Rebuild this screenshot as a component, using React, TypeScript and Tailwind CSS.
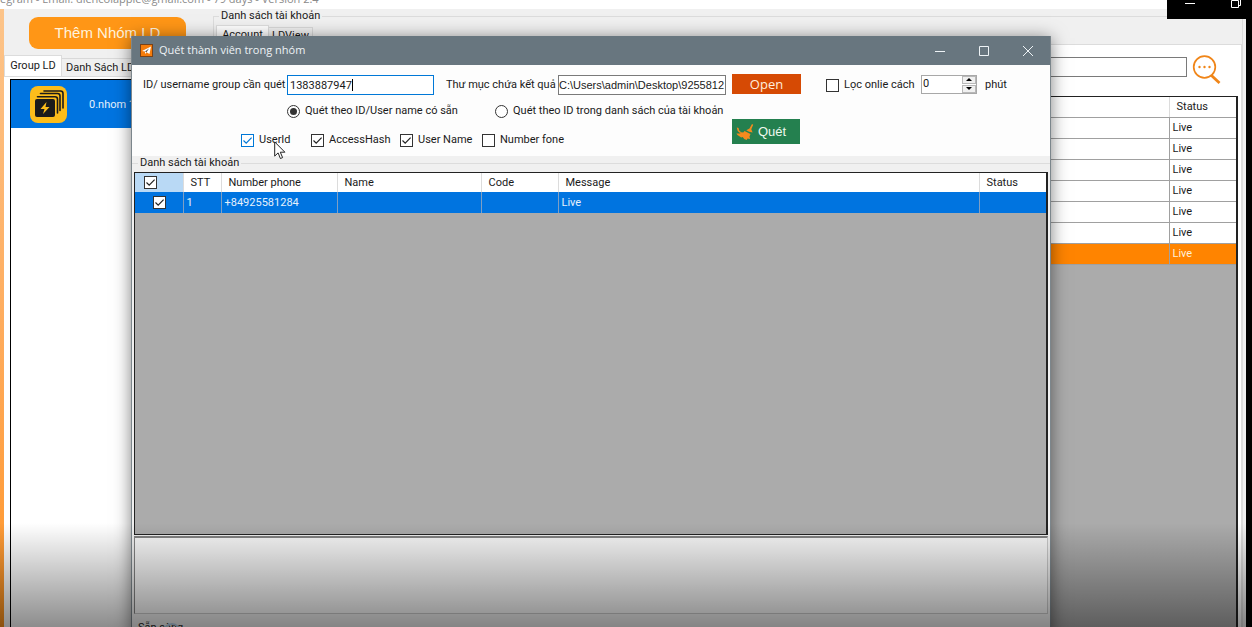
import type { ReactNode } from "react";

type Account = {
  id: number;
  phone: string;
  name: string;
  code: string;
  message: string;
  status: string;
};

interface CheckProps {
  label: string;
  checked?: boolean;
  active?: boolean;
  className?: string;
  children?: ReactNode;
}

interface RadioProps {
  label: string;
  checked?: boolean;
  className?: string;
}

const accounts: Account[] = [
  { id: 1, phone: "+84925581284", name: "", code: "", message: "Live", status: "" },
];

const liveRows = ["Live", "Live", "Live", "Live", "Live", "Live", "Live"];

function TickBox({ label, checked, active }: { label?: string; checked?: boolean; active?: boolean }) {
  return (
    <span className="grid h-[13px] w-[13px] shrink-0">
      <input
        type="checkbox"
        aria-label={label}
        defaultChecked={checked}
        className={`peer col-start-1 row-start-1 m-0 h-[13px] w-[13px] appearance-none border bg-white ${
          active ? "border-[#0078d7]" : "border-[#333333]"
        }`}
      />
      <svg
        viewBox="0 0 13 13"
        className={`pointer-events-none invisible col-start-1 row-start-1 h-[13px] w-[13px] peer-checked:visible ${
          active ? "text-[#0078d7]" : "text-[#222222]"
        }`}
      >
        <path d="M2.5 6.5 5.2 9.2 10.6 3.6" fill="none" stroke="currentColor" strokeWidth="1.2" />
      </svg>
    </span>
  );
}

function Check({ label, checked, active, className, children }: CheckProps) {
  return (
    <label className={`relative flex items-center gap-[5px] whitespace-nowrap ${className ?? ""}`}>
      <TickBox checked={checked} active={active} />
      {label}
      {children}
    </label>
  );
}

function Radio({ label, checked, className }: RadioProps) {
  return (
    <label className={`flex items-center gap-[5px] whitespace-nowrap ${className ?? ""}`}>
      <input
        type="radio"
        name="scan-mode"
        defaultChecked={checked}
        className="m-0 h-[13px] w-[13px] shrink-0 appearance-none rounded-full border border-[#333333] bg-white checked:bg-[#333333] checked:bg-clip-content checked:p-[2px]"
      />
      {label}
    </label>
  );
}

function GroupIcon() {
  return (
    <svg viewBox="0 0 37 37" className="h-[37px] w-[37px] shrink-0">
      <rect width="37" height="37" rx="8" fill="#fcbd1b" />
      <rect x="5" y="13" width="20" height="18" rx="2" fill="#1b1b1b" />
      <g fill="none" stroke="#1b1b1b" strokeWidth="1.6" strokeLinecap="round">
        <path d="M7.500 10.700h17.500q2.500 0 2.500 2.500V27" />
        <path d="M10 8h17q2.500 0 2.500 2.500V25" transform="translate(.5 -.5)" />
        <path d="M14 5h16.500q2.500 0 2.500 2.500V22" />
      </g>
      <path d="M16.500 16 10.500 23h4l-1.500 5 6.500-7h-4z" fill="#fcbd1b" />
    </svg>
  );
}

function SearchIcon() {
  return (
    <svg viewBox="0 0 30 30" className="h-[30px] w-[30px]" fill="none" stroke="#f08518">
      <circle cx="12.500" cy="12" r="10.800" strokeWidth="1.700" />
      <path d="m19.500 20.500 8 7.500" strokeWidth="2.800" />
      <g fill="#f08518" stroke="none">
        <circle cx="7.500" cy="12" r="1.200" />
        <circle cx="12.500" cy="12" r="1.200" />
        <circle cx="17.500" cy="12" r="1.200" />
      </g>
    </svg>
  );
}

function BroomIcon() {
  return (
    <svg viewBox="0 0 18 18" className="h-[18px] w-[18px] shrink-0" fill="#f58a1e">
      <path d="m16 1 1.200.800-1.900 4.400 1.300 3.300-3.600-.700-2.700-1.500 3.200-1.800z" />
      <path d="M8.500 8 14.500 11l-1 2.500.500 2.500-2.500-.500-.800 1.500-2.500-1-1.500-2-1.500.500-3.700-2.500-1-1.500 3.500 0 1.300-1.200 2 .300z" />
      <path d="m.8 4.500 1.700.500L3.200 7.500 5.500 9.500 4 10 1.700 8z" />
    </svg>
  );
}

function Cursor() {
  return (
    <svg viewBox="0 0 12 19" className="absolute left-[33px] top-[8px] h-[19px] w-3">
      <path
        d="M.7.900v14.200l3.400-3.200 2.300 5.600 2.200-.9-2.300-5.400h4.600z"
        fill="#fff"
        stroke="#222"
        strokeWidth="1"
      />
    </svg>
  );
}

function MainWindow() {
  return (
    <div className="flex h-[calc(100%+8px)] flex-col bg-[#f0f0f0]">
      <div className="h-[9px] shrink-0 overflow-hidden bg-white">
        <p className="-mt-2 whitespace-pre font-['Open_Sans',sans-serif] text-[11px] leading-[14px] text-[#8a8a8a]">
          egram - Email: diencoiapple@gmail.com - 79 days - Version 2.4
        </p>
      </div>

      <div className="flex min-h-0 flex-1">
        <div className="w-1 shrink-0 bg-gradient-to-b from-[#fcc48a] to-[#ff9318]" />

        {/* Group list */}
        <div className="flex w-[209px] shrink-0 flex-col">
          <div className="h-[46px] pl-[25px] pt-2">
            <button className="h-8 w-[157px] rounded-[9px] bg-[#ff9616] font-['Liberation_Sans',sans-serif] text-[15px] text-[#fff3dc]">
              Thêm Nhóm LD
            </button>
          </div>
          <div className="flex items-end">
            <button className="h-[21px] w-[58px] border border-b-0 border-[#dcdcdc] bg-white">Group LD</button>
            <button className="h-[18px] w-[80px] whitespace-nowrap border border-b-0 border-l-0 border-[#d9d9d9] pl-1 text-left">
              Danh Sách LD
            </button>
          </div>
          <div className="flex flex-1 flex-col border-t border-[#dcdcdc] bg-white pl-1.5 pt-0.5">
            <div className="flex-1 border border-black bg-white">
              <div className="flex h-12 items-center bg-[#0074e0] pl-[19px] text-[#e6f1fc]">
                <GroupIcon />
                <span className="ml-[22px] mt-0.5 whitespace-nowrap">0.nhom 1</span>
              </div>
            </div>
          </div>
        </div>

        {/* Account list */}
        <div className="flex min-w-0 flex-1 flex-col pr-[3px]">
          <fieldset className="flex min-h-0 min-w-0 flex-1 flex-col border border-[#dcdcdc] pl-0.5">
            <legend className="ml-[3px] px-0.5 leading-[14px]">Danh sách tài khoản</legend>
            <div className="flex h-[21px] items-end">
              <button className="h-[19px] w-[53px] border border-b-0 border-[#dcdcdc] bg-white">Account</button>
              <button className="h-[17px] w-[44px] border border-b-0 border-l-0 border-[#d9d9d9]">LDView</button>
            </div>
            <div className="flex flex-1 flex-col border border-[#dcdcdc] bg-white pr-[3px]">
              <div className="flex h-[51px] items-center justify-end gap-[5px] pr-4">
                <input aria-label="Tìm kiếm" className="mb-2 h-5 w-[400px] border border-[#7a7a7a] bg-white px-1" />
                <button aria-label="Tìm" className="mb-0.5">
                  <SearchIcon />
                </button>
              </div>
              <div className="flex-1 border border-r-2 border-[#222222] bg-[#ababab]">
                <table className="w-full table-fixed border-collapse bg-white">
                  <thead>
                    <tr className="h-5">
                      <th className="border-b border-[#a0a0a0]" aria-label="Message" />
                      <th className="w-[67px] border-b border-l border-b-[#a0a0a0] border-l-[#dcdcdc] p-0 pl-[7px] text-left font-normal leading-[14px]">
                        Status
                      </th>
                    </tr>
                  </thead>
                  <tbody>
                    {liveRows.map((status, index) => (
                      <tr
                        key={index}
                        className={`h-[21px] ${index === liveRows.length - 1 ? "bg-[#ff8400] text-[#fff0d8]" : ""}`}
                      >
                        <td className="border-b border-[#a0a0a0] p-0" />
                        <td className="border-b border-l border-[#a0a0a0] p-0 pl-[3px] leading-[14px]">{status}</td>
                      </tr>
                    ))}
                  </tbody>
                </table>
              </div>
            </div>
          </fieldset>
        </div>
      </div>
    </div>
  );
}

function ScanForm() {
  return (
    <form className="h-[91px] shrink-0 bg-[#fdfdfd] pl-[11px] pt-[9px]" onSubmit={(e) => e.preventDefault()}>
      <div className="flex h-[22px] items-center whitespace-nowrap">
        <label htmlFor="group" className="w-36 shrink-0">
          ID/ username group cần quét
        </label>
        <div className="relative flex w-[147px] shrink-0">
          <input
            id="group"
            defaultValue="1383887947"
            className="h-5 w-full border border-[#0078d7] bg-white px-0.5 outline-none"
          />
          <span className="absolute left-[65px] top-1 h-3 w-px bg-black" />
        </div>
        <label htmlFor="folder" className="ml-3 w-28 shrink-0">
          Thư mục chứa kết quả
        </label>
        <input
          id="folder"
          defaultValue="C:\Users\admin\Desktop\9255812"
          className="h-5 w-[168px] shrink-0 border border-[#7a7a7a] bg-white font-['Liberation_Sans',sans-serif]"
        />
        <button
          type="button"
          className="mb-0.5 ml-1.5 h-5 w-[69px] shrink-0 bg-[#d64a04] font-['Open_Sans',sans-serif] text-[13px] leading-5 text-[#ffeedd]"
        >
          Open
        </button>
        <Check label="Lọc onlie cách" className="ml-[25px] w-[95px] shrink-0" />
        <div className="mb-0.5 flex h-[19px] w-[56px] shrink-0 border border-[#a8a8a8] bg-white">
          <input aria-label="Số phút" defaultValue="0" className="min-w-0 flex-1 pl-px outline-none" />
          <div className="flex w-[14px] flex-col gap-px">
            <button type="button" aria-label="Tăng" className="flex flex-1 items-center justify-center border border-[#b8b8b8] bg-[#f0f0f0]">
              <svg viewBox="0 0 6 3" className="h-[3px] w-1.5">
                <path d="M0 3 3 0l3 3z" />
              </svg>
            </button>
            <button type="button" aria-label="Giảm" className="flex flex-1 items-center justify-center border border-[#b8b8b8] bg-[#f0f0f0]">
              <svg viewBox="0 0 6 3" className="h-[3px] w-1.5">
                <path d="M0 0h6L3 3z" />
              </svg>
            </button>
          </div>
        </div>
        <span className="ml-2">phút</span>
      </div>

      <div className="flex items-start">
        <div className="w-[589px] shrink-0">
          <div className="flex h-[30px] items-center pl-36">
            <Radio label="Quét theo ID/User name có sẵn" checked className="w-[208px]" />
            <Radio label="Quét theo ID trong danh sách của tài khoản" />
          </div>
          <div className="flex h-7 items-center pl-[98px]">
            <Check label="UserId" checked active className="w-[70px]">
              <Cursor />
            </Check>
            <Check label="AccessHash" checked className="w-[89px]" />
            <Check label="User Name" checked className="w-[82px]" />
            <Check label="Number fone" />
          </div>
        </div>
        <button
          type="button"
          className="mt-[23px] flex h-[25px] w-[68px] items-center gap-1 bg-[#24804f] pl-1 font-['Liberation_Sans',sans-serif] text-[13px] text-[#eef8ee]"
        >
          <BroomIcon />
          Quét
        </button>
      </div>
    </form>
  );
}

function AccountTable() {
  const th = "border-l border-[#dcdcdc] p-0 pl-[7px] text-left font-normal leading-[14px]";
  const td = "border-l border-[#7f9fc4] p-0 pl-[3px] leading-[14px]";

  return (
    <div className="mx-0.5 min-h-0 flex-1 border border-r-2 border-[#222222] bg-[#ababab]">
      <table className="w-full table-fixed border-collapse">
        <thead>
          <tr className="h-[19px] bg-white">
            <th className="w-[48px] bg-[#b9d9f5] p-0 pl-[9px]">
              <TickBox label="Chọn tất cả" checked />
            </th>
            <th className={`w-[38px] ${th}`}>STT</th>
            <th className={`w-[116px] ${th}`}>Number phone</th>
            <th className={`w-[144px] ${th}`}>Name</th>
            <th className={`w-[77px] ${th}`}>Code</th>
            <th className={th}>Message</th>
            <th className={`w-[67px] ${th}`}>Status</th>
          </tr>
        </thead>
        <tbody>
          {accounts.map((account) => (
            <tr key={account.id} className="h-[21px] bg-[#0074e0] text-[#e6f1fc]">
              <td className="p-0 pl-[18px]">
                <TickBox label={`Chọn ${account.phone}`} checked />
              </td>
              <td className={td}>{account.id}</td>
              <td className={td}>{account.phone}</td>
              <td className={td}>{account.name}</td>
              <td className={td}>{account.code}</td>
              <td className={td}>{account.message}</td>
              <td className={td}>{account.status}</td>
            </tr>
          ))}
        </tbody>
      </table>
    </div>
  );
}

function ScanDialog() {
  return (
    <section
      aria-label="Quét thành viên trong nhóm"
      className="absolute -bottom-2.5 left-[131px] right-[201px] top-9 flex flex-col border-x border-[#7c868c] bg-[#f0f0f0] shadow-[0_2px_16px_rgba(0,0,0,0.5)]"
    >
      <header className="flex h-[29px] shrink-0 items-center bg-[#68767f] pl-2 text-[#eef3f6]">
        <svg viewBox="0 0 13 13" className="h-[13px] w-[13px]">
          <rect width="13" height="13" fill="#f57c0b" />
          <rect x=".5" y=".5" width="12" height="12" fill="none" stroke="#7a4218" />
          <path d="M2 7 11 2.500 9.500 10 6.500 8.200 5 10V7.500z" fill="#fff" />
          <path d="M5 7.500 9 4.500 6.500 8.200" fill="#555" />
        </svg>
        <h1 className="ml-1.5 flex-1 pb-0.5 font-['Open_Sans',sans-serif] text-[11px]">Quét thành viên trong nhóm</h1>
        <button aria-label="Thu nhỏ" className="flex h-full w-11 items-center justify-center">
          <svg viewBox="0 0 10 10" className="h-2.5 w-2.5" stroke="currentColor">
            <path d="M0 5.500h10" />
          </svg>
        </button>
        <button aria-label="Phóng to" className="flex h-full w-11 items-center justify-center">
          <svg viewBox="0 0 10 10" className="h-2.5 w-2.5" fill="none" stroke="currentColor">
            <path d="M.5.500h9v9h-9z" />
          </svg>
        </button>
        <button aria-label="Đóng" className="flex h-full w-11 items-center justify-center">
          <svg viewBox="0 0 10 10" className="h-2.5 w-2.5" stroke="currentColor">
            <path d="m0 0 10 10M10 0 0 10" />
          </svg>
        </button>
      </header>

      <ScanForm />

      <fieldset className="flex min-h-0 min-w-0 flex-1 flex-col border-t border-[#dcdcdc]">
        <legend className="ml-1.5 px-0.5 leading-[14px]">Danh sách tài khoản</legend>
        <div className="h-0.5 shrink-0" />
        <AccountTable />
      </fieldset>
      <textarea
        aria-label="Nhật ký"
        className="mx-0.5 mt-px h-[78px] shrink-0 resize-none border border-t-2 border-[#828282] border-b-[#c8c8c8] border-r-[#c8c8c8] bg-[#f6f6f6]"
      />
      <footer className="flex h-[23px] shrink-0 items-center pl-1.5 pt-1">
        <span>Sẵn sàng</span>
        <span className="-ml-5 mt-2 h-[18px] w-[18px] rounded-full border-2 border-[#b4cfe6]" />
      </footer>
    </section>
  );
}

export default function App() {
  return (
    <div className="relative flex h-screen overflow-hidden bg-black font-[Roboto,'Liberation_Sans',sans-serif] text-[11px] leading-[14px] text-[#1a1a1a]">
      <main className="min-w-0 flex-1">
        <MainWindow />
      </main>
      <div className="w-1.5 shrink-0" />

      <ScanDialog />

      {/* Player window controls */}
      <div className="absolute right-0 top-0 flex h-[19px] w-[85px] bg-black text-white">
        <button aria-label="Minimize" className="h-full w-[46px]">
          <svg viewBox="0 0 46 19" fill="none" stroke="currentColor">
            <path d="M18 3.500h10" />
          </svg>
        </button>
        <button aria-label="Restore" className="h-full flex-1">
          <svg viewBox="0 0 39 19" fill="none" stroke="currentColor">
            <path d="M18.500.500h7v7h-7zM20.500-1.500h7v7h-2" />
          </svg>
        </button>
      </div>

      <div className="pointer-events-none absolute inset-x-0 bottom-0 h-[104px] bg-gradient-to-b from-transparent to-black/45" />
    </div>
  );
}
